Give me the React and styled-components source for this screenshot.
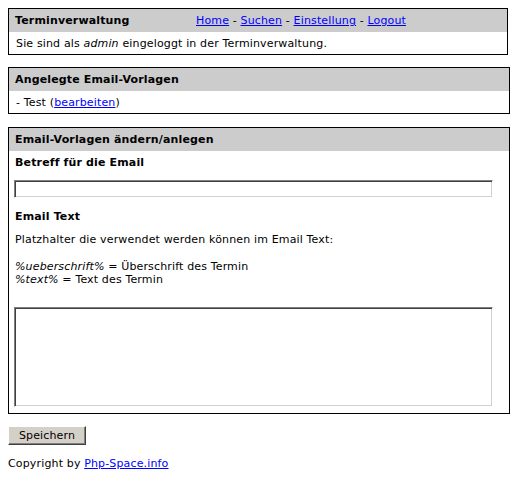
import React from "react";
import styled, { createGlobalStyle } from "styled-components";

const Global = createGlobalStyle`
  body {
    margin: 8px;
    font-family: "DejaVu Sans", Verdana, sans-serif;
    font-size: 11px;
    line-height: 13px;
    letter-spacing: 0.15px;
    color: #000;
    background: #fff;
  }
`;

const Page = styled.div`
  display: flex;
  flex-direction: column;
  align-items: flex-start;
`;

const Panel = styled.section`
  width: ${(p) => p.$width}px;
  border: 1px solid #000;
  margin-bottom: ${(p) => p.$gap}px;
  box-sizing: border-box;
`;

const Head = styled.div`
  display: flex;
  align-items: center;
  height: 23px;
  padding: 0 6px;
  background: #cccccc;
  font-weight: bold;
`;

const HeadTitle = styled.div`
  width: ${(p) => (p.$width ? `${p.$width}px` : "auto")};
  flex: none;
`;

const Nav = styled.nav`
  font-weight: normal;
`;

const Link = styled.a`
  color: #0000ff;
  text-decoration: underline;
`;

const Body = styled.div`
  display: flex;
  flex-direction: column;
  align-items: flex-start;
  padding: ${(p) => p.$pad || "0 6px"};
  height: ${(p) => (p.$height ? `${p.$height}px` : "auto")};
  justify-content: ${(p) => (p.$height ? "center" : "flex-start")};
`;

const Label = styled.div`
  font-weight: bold;
  padding-left: 1px;
  margin-top: ${(p) => p.$mt || 0}px;
`;

const Text = styled.div`
  padding-left: 1px;
  margin-top: ${(p) => p.$mt || 0}px;
`;

const inset = `
  box-sizing: border-box;
  width: 479px;
  border: 1px solid;
  border-color: #808080 #ffffff #ffffff #808080;
  box-shadow: inset 1px 1px 0 #404040, inset -1px -1px 0 #d4d0c8;
  background: #fff;
  font-family: inherit;
  font-size: 11px;
  outline: none;
  margin: 0;
  padding: 2px;
`;

const Input = styled.input`
  ${inset}
  height: 18px;
  margin-top: 11px;
`;

const Area = styled.textarea`
  ${inset}
  height: 100px;
  margin-top: 21px;
  resize: none;
  display: block;
`;

const Button = styled.button`
  box-sizing: border-box;
  width: 78px;
  height: 19px;
  padding: 0;
  margin: 0 0 12px 0;
  background: #d4d0c8;
  font-family: inherit;
  font-size: 11px;
  letter-spacing: 0.15px;
  color: #000;
  border: 1px solid;
  border-color: #ffffff #404040 #404040 #ffffff;
  box-shadow: inset -1px -1px 0 #808080;
`;

const Footer = styled.div``;

export default function App() {
  return (
    <>
      <Global />
      <Page>
        <Panel $width={500} $gap={12}>
          <Head>
            <HeadTitle $width={181}>Terminverwaltung</HeadTitle>
            <Nav>
              <Link href="#">Home</Link> - <Link href="#">Suchen</Link> -{" "}
              <Link href="#">Einstellung</Link> - <Link href="#">Logout</Link>
            </Nav>
          </Head>
          <Body $height={22}>
            <Text>
              Sie sind als <i>admin</i> eingeloggt in der Terminverwaltung.
            </Text>
          </Body>
        </Panel>

        <Panel $width={502} $gap={13}>
          <Head>
            <HeadTitle>Angelegte Email-Vorlagen</HeadTitle>
          </Head>
          <Body $height={22}>
            <Text>
              - Test (<Link href="#">bearbeiten</Link>)
            </Text>
          </Body>
        </Panel>

        <Panel $width={502} $gap={12}>
          <Head>
            <HeadTitle>Email-Vorlagen ändern/anlegen</HeadTitle>
          </Head>
          <Body $pad="5px 5px 6px 5px">
            <Label>Betreff für die Email</Label>
            <Input type="text" />
            <Label $mt={12}>Email Text</Label>
            <Text $mt={10}>Platzhalter die verwendet werden können im Email Text:</Text>
            <Text $mt={14}>
              <i>%ueberschrift%</i> = Überschrift des Termin
            </Text>
            <Text>
              <i>%text%</i> = Text des Termin
            </Text>
            <Area />
          </Body>
        </Panel>

        <Button type="button">Speichern</Button>
        <Footer>
          Copyright by <Link href="#">Php-Space.info</Link>
        </Footer>
      </Page>
    </>
  );
}
